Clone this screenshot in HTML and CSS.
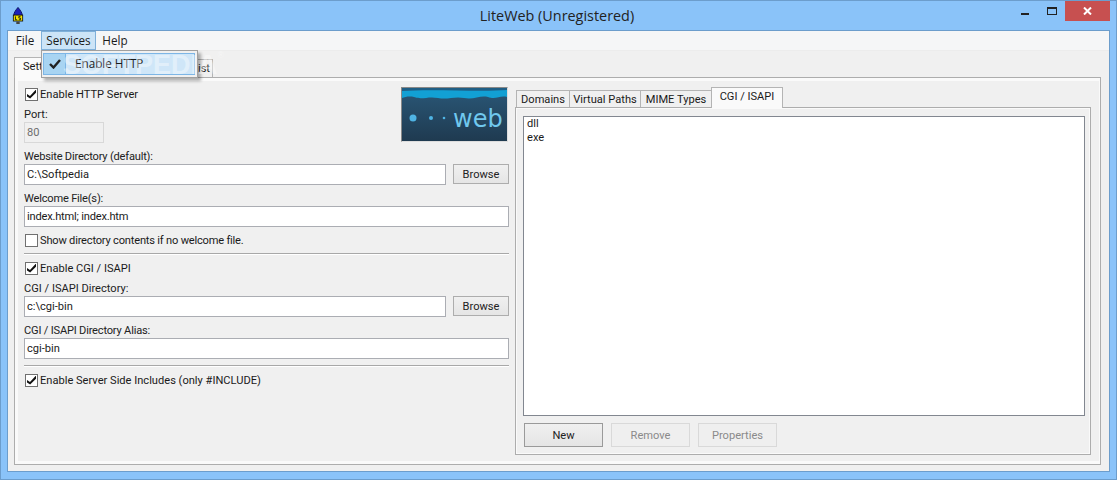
FILE: index.html
```html
<!DOCTYPE html>
<html>
<head>
<meta charset="utf-8">
<title>LiteWeb</title>
<link rel="stylesheet" href="styles.css">
</head>
<body>
<div class="window">
  <header class="titlebar">
    <svg class="appicon" width="12" height="17" viewBox="0 0 14 20">
      <path d="M7 0.500 C10 4 12 7 12 10 L2 10 C2 7 4 4 7 0.500Z" fill="#1c22b8" stroke="#000050"/>
      <rect x="1.500" y="9.500" width="11" height="7" fill="#f2e400" stroke="#111"/>
      <path d="M4 11 V15 H6 M10 11 H8 V13 H10 V15 H8" fill="none" stroke="#111"/>
      <rect x="5" y="17" width="4" height="3" fill="#444"/>
    </svg>
    <div class="title">LiteWeb (Unregistered)</div>
    <div class="controls">
      <span class="ctl-min"></span>
      <span class="ctl-max"></span>
      <span class="ctl-close"><svg width="9" height="8" viewBox="0 0 9 8"><path d="M1 0.500 L8 7.500 M8 0.500 L1 7.500" stroke="#fff" stroke-width="2"/></svg></span>
    </div>
  </header>
  <div class="client">
    <nav class="menubar">
      <span class="menuitem m-file">File</span>
      <span class="menuitem m-services">Services</span>
      <span class="menuitem m-help">Help</span>
    </nav>
    <div class="body">
      <div class="tabs-top">
        <span class="tab tab-settings active">Settings</span>
        <span class="tab tab-access">Access list</span>
      </div>
      <div class="panel-outer">
        <section class="left">
          <div class="top-row">
            <div class="top-fields">
              <label class="check"><span class="box on"></span>Enable HTTP Server</label>
              <div class="lbl">Port:</div>
              <div class="input port">80</div>
            </div>
            <div class="banner">
              <svg width="105" height="53" viewBox="0 0 105 53">
                <defs>
                  <linearGradient id="sky" x1="0" y1="0" x2="0" y2="1">
                    <stop offset="0" stop-color="#2a5878"/><stop offset="1" stop-color="#1f3a50"/>
                  </linearGradient>
                </defs>
                <rect width="105" height="53" fill="url(#sky)"/>
                <path d="M0 1 H105 V9 C98 7 94 12 86 9 C78 7 72 12 62 10 C52 8 46 12 36 10 C26 8 20 12 12 9 C7 8 3 9 0 10Z" fill="#12a0d4"/>
                <path d="M0 0 H105 V2 C80 4 30 1 0 3Z" fill="#1f5f86"/>
                <circle cx="11" cy="30" r="3.500" fill="#4fb4e4"/>
                <circle cx="29" cy="30" r="2" fill="#4fb4e4"/>
                <circle cx="42" cy="30" r="1.300" fill="#4fb4e4"/>
                <text x="51" y="39" class="banner-text">web</text>
              </svg>
            </div>
          </div>
          <div class="lbl tight">Website Directory (default):</div>
          <div class="row"><div class="input grow">C:\Softpedia</div><button class="btn browse">Browse</button></div>
          <div class="lbl tight">Welcome File(s):</div>
          <div class="input tight">index.html; index.htm</div>
          <label class="check mt tight"><span class="box"></span>Show directory contents if no welcome file.</label>
          <hr class="sep">
          <label class="check"><span class="box on"></span>Enable CGI / ISAPI</label>
          <div class="lbl">CGI / ISAPI Directory:</div>
          <div class="row"><div class="input grow">c:\cgi-bin</div><button class="btn browse">Browse</button></div>
          <div class="lbl tight">CGI / ISAPI Directory Alias:</div>
          <div class="input">cgi-bin</div>
          <hr class="sep">
          <label class="check"><span class="box on"></span>Enable Server Side Includes (only #INCLUDE)</label>
        </section>
        <section class="right">
          <div class="tabs-inner">
            <span class="tab t-dom">Domains</span>
            <span class="tab t-vir">Virtual Paths</span>
            <span class="tab t-mime">MIME Types</span>
            <span class="tab t-cgi active">CGI / ISAPI</span>
          </div>
          <div class="panel-inner">
            <div class="list"><div>dll</div><div>exe</div></div>
            <div class="actions">
              <button class="btn act default">New</button>
              <button class="btn act" disabled>Remove</button>
              <button class="btn act" disabled>Properties</button>
            </div>
          </div>
        </section>
      </div>
    </div>
    <div class="dropdown">
      <div class="dd-item"><span class="dd-check"><svg width="12" height="10" viewBox="0 0 12 10"><path d="M1 5 L4.500 8.500 L11 1" fill="none" stroke="#222" stroke-width="2.400"/></svg></span><span class="dd-label">Enable HTTP</span></div>
    </div>
    <div class="watermark">SOFTPEDIA<sup>®</sup></div>
  </div>
</div>
</body>
</html>
```
FILE: styles.css
```css
* { box-sizing: border-box; }
html, body { margin: 0; padding: 0; }
body { width: 1117px; height: 480px; overflow: hidden; font-family: Roboto, "Liberation Sans", sans-serif; font-size: 11.100px; color: #1a1a1a; }
.tight { letter-spacing: -0.2px; }
.window { width: 1117px; height: 480px; background: #8ac3f9; border: 1px solid #6c9dcc; display: flex; flex-direction: column; padding: 0 6px 7px; }
.titlebar { height: 29px; display: flex; align-items: flex-start; position: relative; flex: none; }
.appicon { margin: 6px 0 0 5px; }
.title { position: absolute; left: 0; right: 3px; top: 5px; text-align: center; font-family: "Open Sans", "Noto Sans", sans-serif; font-size: 14.400px; color: #222; }
.controls { position: absolute; right: 0; top: 0; display: flex; align-items: flex-start; }
.ctl-min { width: 8px; height: 2px; background: #222; margin: 12px 18px 0 0; }
.ctl-max { width: 10px; height: 8px; border: 1px solid #222; border-top-width: 2px; margin: 6px 8px 0 0; }
.ctl-close { width: 45px; height: 20px; background: #c75050; display: flex; align-items: center; justify-content: center; }
.client { flex: 1; background: #f0f0f0; border: 1px solid #6c9dcc; display: flex; flex-direction: column; position: relative; }
.menubar { height: 20px; background: #f5f6f7; border-bottom: 1px solid #ececec; display: flex; flex: none; padding-left: 1px; font-family: "Open Sans", "Noto Sans", sans-serif; font-size: 11.700px; }
.menuitem { height: 19px; line-height: 18px; text-align: center; }
.m-file { width: 32px; }
.m-services { width: 55px; background: #cce4f7; border: 1px solid #7fb0d9; line-height: 17px; }
.m-help { width: 38px; }
.body { flex: 1; display: flex; flex-direction: column; padding: 6px 8px 6px 6px; }
.tabs-top, .tabs-inner { display: flex; flex: none; position: relative; }
.tabs-top { height: 20px; z-index: 1; }
.tab { border: 1px solid #b4b4b4; background: #f0f0f0; border-bottom: none; text-align: center; line-height: 17px; height: 17px; margin-top: 3px; white-space: nowrap; }
.tab.active { background: #fafafa; height: 21px; margin-top: 0; line-height: 18px; }
.tab-settings { width: 57px; padding-left: 8px; text-align: left; overflow: hidden; }
.tab-access { width: 142px; height: 18px; margin-top: 2px; text-align: right; padding-right: 2px; }
.panel-outer { flex: 1; border: 1px solid #adadad; box-shadow: inset 3px 3px 0 #fafafa, inset -1px -3px 0 #fafafa; display: flex; padding: 9px 0 0 9px; }
.left { width: 485px; flex: none; display: flex; flex-direction: column; }
.right { width: 576px; margin-left: 6px; flex: none; display: flex; flex-direction: column; padding-bottom: 9px; }
.top-row { display: flex; justify-content: space-between; height: 56px; }
.top-fields { display: flex; flex-direction: column; }
.banner { width: 107px; height: 55px; margin-right: 1px; overflow: hidden; border: 1px solid #888; border-bottom-color: #ddd; border-right-color: #ddd; }
.banner svg { display: block; }
.banner-text { font: 24px "DejaVu Sans", sans-serif; fill: #70c8ee; }
.check { display: flex; align-items: center; height: 14px; gap: 2px; padding-left: 1px; flex: none; }
.check.mt { margin-top: 6px; }
.box { width: 13px; height: 13px; border: 1px solid #707070; background: #fff; position: relative; flex: none; }
.box.on::after { content: ""; position: absolute; left: 1px; top: 1px; width: 9px; height: 9px; background: #111; clip-path: polygon(0 50%, 33% 72%, 100% 0, 100% 35%, 35% 100%, 0 78%); }
.lbl { height: 13px; line-height: 13px; margin-top: 7px; color: #222; flex: none; }
.input { border: 1px solid #abadb3; background: #fff; height: 21px; line-height: 19px; padding-left: 2px; margin-top: 1px; flex: none; }
.input.port { width: 80px; background: #f0f0f0; border-color: #d8d8d8; color: #6d6d6d; }
.input.grow { flex: 1; }
.row { display: flex; gap: 7px; flex: none; }
.btn { border: 1px solid #adadad; background: linear-gradient(#f0f0f0, #e5e5e5); font: inherit; color: #222; padding: 0; }
.browse { width: 56px; height: 20px; margin-top: 1px; }
.sep { border: 0; border-top: 1px solid #a8a8a8; border-bottom: 1px solid #fff; margin: 6px 0; height: 2px; width: 100%; flex: none; }
.tabs-inner { height: 20px; padding-left: 1px; z-index: 1; }
.t-dom { width: 54px; }
.t-vir { width: 72px; margin-left: -1px; }
.t-mime { width: 72px; margin-left: -1px; }
.t-cgi { width: 72px; margin-left: -1px; }
.panel-inner { flex: 1; border: 1px solid #adadad; box-shadow: inset 0 0 0 1px #fafafa; display: flex; flex-direction: column; padding: 8px 5px 0 7px; }
.list { flex: 1; border: 1px solid #828790; background: #fff; padding: 0 3px; line-height: 14px; }
.actions { display: flex; gap: 8px; padding: 7px 0 7px 1px; flex: none; }
.act { width: 79px; height: 24px; }
.act.default { border-color: #9a9a9a; }
.act:disabled { color: #8a8a8a; border-color: #d9d9d9; background: #efefef; }
.dropdown { position: absolute; left: 33px; top: 19px; width: 157px; height: 28px; background: #f0f0f0; border: 1px solid #a0a0a0; box-shadow: 3px 3px 3px rgba(0,0,0,0.3); padding: 2px 2px 2px 1px; z-index: 5; }
.dd-item { height: 22px; background: #cfe6f8; border: 1px solid #7db6e6; display: flex; align-items: center; font-family: "Open Sans", "Noto Sans", sans-serif; font-size: 11.700px; }
.dd-check { width: 22px; height: 20px; background: #a8d4f2; border-right: 1px solid #7db6e6; margin-right: 9px; display: flex; align-items: center; justify-content: center; }
.dd-label { padding-bottom: 2px; }
.watermark { position: absolute; left: 55px; top: 19px; z-index: 6; font: bold 27px "Liberation Sans", Arial, sans-serif; color: rgba(255,255,255,0.4); pointer-events: none; white-space: nowrap; }
.watermark sup { font-size: 9px; vertical-align: top; font-weight: normal; }
```
